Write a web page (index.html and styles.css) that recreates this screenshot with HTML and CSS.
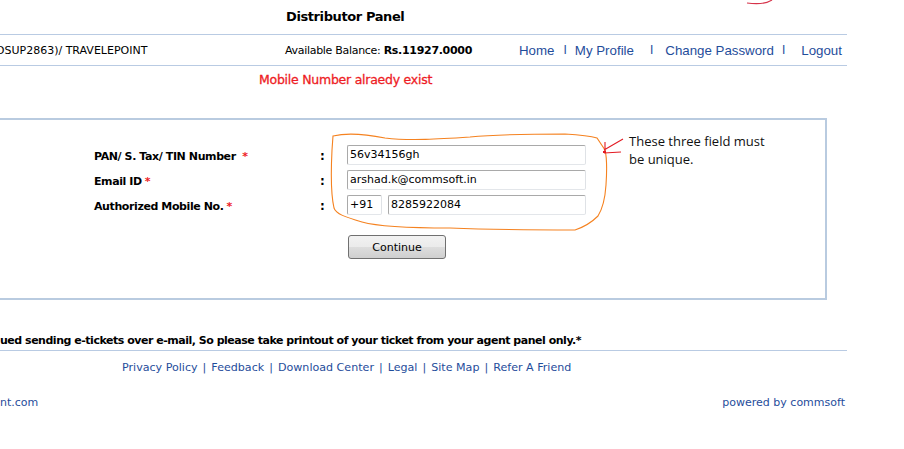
FILE: index.html
```html
<!DOCTYPE html>
<html>
<head>
<meta charset="utf-8">
<title>Distributor Panel</title>
<link rel="stylesheet" href="styles.css">
</head>
<body>
<div class="page">
  <div class="title-row"><span class="title">Distributor Panel</span></div>
  <div class="user-row">
    <span class="user">DSUP2863)/ TRAVELEPOINT</span>
    <span class="balance">Available Balance: <b>Rs.11927.0000</b></span>
    <nav class="nav">
      <a href="#">Home</a><span class="sep s1">I</span><a href="#">My Profile</a><span class="sep s2">I</span><a href="#">Change Password</a><span class="sep s3">I</span><a href="#">Logout</a>
    </nav>
  </div>
  <div class="msg-row"><span class="msg">Mobile Number alraedy exist</span></div>

  <div class="box">
    <div class="form">
      <div class="label">PAN/ S. Tax/ TIN Number <span class="req">*</span></div>
      <div class="colon">:</div>
      <div class="field"><span class="input full">56v34156gh</span></div>

      <div class="label">Email ID<span class="req">*</span></div>
      <div class="colon">:</div>
      <div class="field"><span class="input full">arshad.k@commsoft.in</span></div>

      <div class="label">Authorized Mobile No.<span class="req">*</span></div>
      <div class="colon">:</div>
      <div class="field"><span class="input code">+91</span><span class="input mobile">8285922084</span></div>

      <div></div><div></div>
      <div class="field btn-cell"><button class="btn">Continue</button></div>
    </div>
  </div>

  <div class="notice">ued sending e-tickets over e-mail, So please take printout of your ticket from your agent panel only.*</div>
  <div class="footer-links">
    <a href="#">Privacy Policy</a><span class="bar">|</span><a href="#">Feedback</a><span class="bar">|</span><a href="#">Download Center</a><span class="bar">|</span><a href="#">Legal</a><span class="bar">|</span><a href="#">Site Map</a><span class="bar">|</span><a href="#">Refer A Friend</a>
  </div>
  <div class="bottom-row">
    <a href="#" class="site">nt.com</a>
    <a href="#" class="powered">powered by commsoft</a>
  </div>

  <div class="note">These three field must<br>be unique.</div>
  <svg class="marks" width="904" height="449" viewBox="0 0 904 449">
    <path d="M333 136 C 345 133, 365 134, 385 138 C 410 141, 440 139, 470 137 C 500 134, 530 134, 565 134 C 580 135, 590 136, 597 138 L 605 150 C 607 158, 607 170, 606 185 C 605 200, 603 208, 598 216 C 592 222, 584 227, 575 230 C 545 230, 500 230, 450 228 C 410 228, 380 227, 362 222 C 345 217, 336 214, 334 208 C 331 195, 331 170, 332 150 Z" fill="none" stroke="#f58220" stroke-width="1.1"/>
    <path d="M605 142 L 605 153 M 604 150 L 623 139 M 604 153 L 621 152" fill="none" stroke="#e31b23" stroke-width="1.1"/>
    <path d="M603 151 l3 0 l0 2 l-3 0 z" fill="#e31b23"/>
    <path d="M747 3 C 755 4, 766 4, 772 0" fill="none" stroke="#d6334a" stroke-width="1.2"/>
  </svg>
</div>
</body>
</html>
```
FILE: styles.css
```css
* { box-sizing: border-box; }
html, body { margin: 0; padding: 0; background: #fff; }
body { font-family: "DejaVu Sans", Verdana, sans-serif; color: #000; overflow: hidden; }
a { text-decoration: none; color: #1f4d9b; }

.page { position: relative; width: 904px; height: 449px; }

.title-row { height: 35px; padding-left: 286px; padding-top: 6px; border-bottom: 1px solid #b9cbe3; width: 847px; }
.title { font-weight: bold; font-size: 13px; letter-spacing: -0.4px; }

.user-row { height: 31px; width: 847px; border-bottom: 1px solid #b9cbe3; display: flex; align-items: center; font-size: 11px; white-space: nowrap; }
.user, .balance, .nav { flex-shrink: 0; }
.user { margin-left: -4px; width: 289px; }
.balance { width: 234px; letter-spacing: -0.3px; }
.balance b { font-weight: bold; }
.nav { display: flex; align-items: center; font-family: "Liberation Sans", Arial, sans-serif; font-size: 13.3px; }
.nav a { color: #1f4d9b; }
.nav .sep { color: #1f4d9b; font-size: 12px; }
.nav .s1 { padding: 0 8px 0 9px; }
.nav .s2 { padding: 0 12px 0 16px; }
.nav .s3 { padding: 0 16px 0 8px; }

.msg-row { height: 52px; padding-left: 259px; padding-top: 3px; }
.msg { color: #ee1c25; font-size: 12.5px; letter-spacing: -0.25px; -webkit-text-stroke: 0.3px #ee1c25; }

.box { margin-left: -20px; width: 847px; height: 182px; border: 2px solid #b9cbe0; padding: 25px 0 0 112px; }
.form { display: grid; grid-template-columns: 226px 27px 240px; grid-auto-rows: 25px; }
.label { font-size: 11px; font-weight: bold; display: flex; align-items: center; padding-bottom: 3px; letter-spacing: -0.4px; white-space: pre; }
.req { color: #ee1c25; margin-left: 3px; font-size: 11px; }
.colon { font-size: 12px; font-weight: bold; display: flex; align-items: center; padding-bottom: 3px; }
.field { display: flex; gap: 6px; align-items: flex-start; }
.input { display: block; height: 20px; border: 1px solid #a9a9a9; border-right-color: #dfe2e6; border-bottom-color: #e3e6ea; border-radius: 2px; font-size: 11px; line-height: 18px; padding-left: 2px; background: #fff; }
.input.full { width: 239px; }
.input.code { width: 35px; }
.input.mobile { width: 198px; }
.btn-cell { padding-top: 15px; }
.btn { width: 98px; height: 24px; font-family: "DejaVu Sans", sans-serif; font-size: 11px; border: 1px solid #707070; border-radius: 3px; background: linear-gradient(#f2f2f2, #ebebeb 50%, #dddddd 51%, #cfcfcf); padding: 0; margin-left: 1px; }

.notice { margin-top: 33px; font-size: 11px; font-weight: bold; height: 18px; padding-top: 1px; width: 847px; border-bottom: 1px solid #b9cbe3; letter-spacing: -0.48px; white-space: nowrap; }
.footer-links { padding-left: 122px; padding-top: 10px; height: 45px; font-size: 11.1px; }
.footer-links a { color: #1f4d9b; }
.bar { color: #1f4d9b; padding: 0 5px; }
.bottom-row { width: 847px; display: flex; justify-content: space-between; font-size: 11px; padding-right: 2px; }
.bottom-row a { color: #1f4d9b; }

.note { position: absolute; left: 629px; top: 132px; font-family: "Open Sans", "Noto Sans", sans-serif; font-size: 13px; line-height: 18px; color: #111; }
.marks { position: absolute; left: 0; top: 0; pointer-events: none; }
```
